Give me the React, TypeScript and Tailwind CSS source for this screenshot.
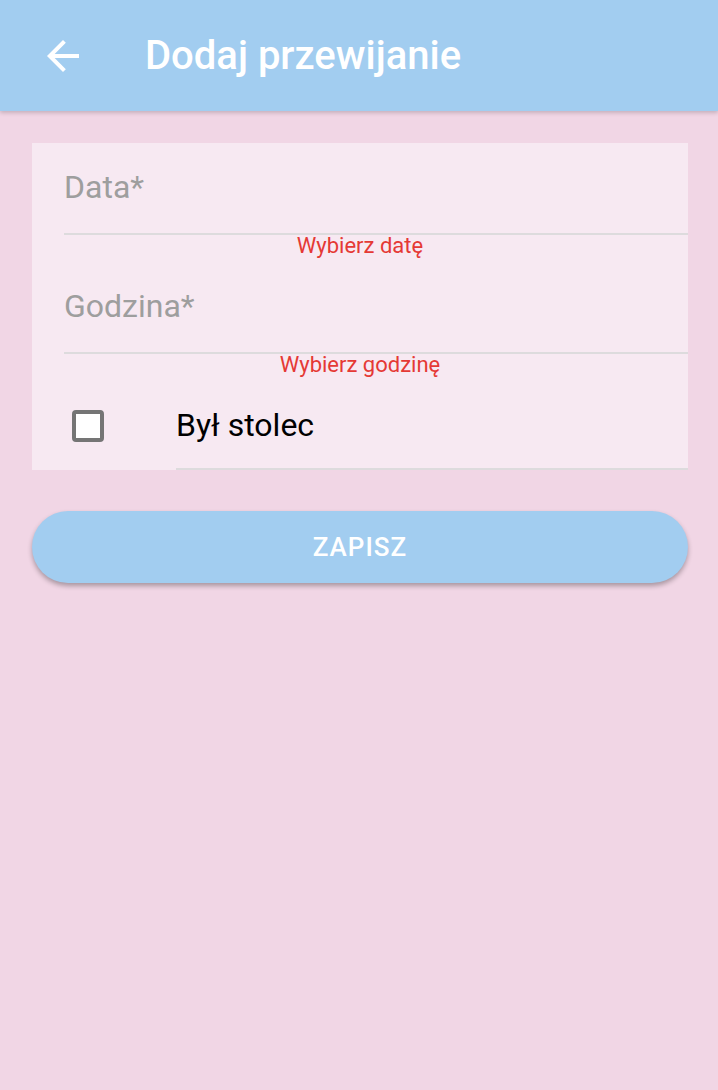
import React from "react";

export default function App() {
  return (
    <div
      className="min-h-[1090px] w-full bg-[#f1d6e5]"
      style={{ fontFamily: "Roboto, 'Noto Sans', sans-serif" }}
    >
      <header className="relative z-10 flex h-[111px] items-center bg-[#a2cdf0] shadow-[0_2px_4px_rgba(0,0,0,0.18)]">
        <svg
          className="ml-[39px] h-[48px] w-[48px]"
          viewBox="0 0 24 24"
          fill="#ffffff"
        >
          <path d="M20 11H7.83l5.59-5.59L12 4l-8 8 8 8 1.41-1.41L7.83 13H20v-2z" />
        </svg>
        <h1 className="ml-[58px] text-[40px] font-medium leading-none text-white">
          Dodaj przewijanie
        </h1>
      </header>

      <main className="pl-8 pr-[30px] pt-8">
        <div className="bg-[#f7e9f2]">
          {/* Data field */}
          <div className="ml-8 h-[92px] border-b-2 border-[#dddbdd] pt-[28px]">
            <div className="text-[32px] leading-none text-[#9e9e9e]">Data*</div>
          </div>
          <div className="h-[27px] text-center text-[22px] leading-none text-[#e53935]">
            Wybierz datę
          </div>

          {/* Godzina field */}
          <div className="ml-8 h-[92px] border-b-2 border-[#dddbdd] pt-[28px]">
            <div className="text-[32px] leading-none text-[#9e9e9e]">Godzina*</div>
          </div>
          <div className="h-[27px] text-center text-[22px] leading-none text-[#e53935]">
            Wybierz godzinę
          </div>

          {/* Checkbox row */}
          <div className="flex h-[89px]">
            <div className="flex w-[144px] items-center pl-[40px]">
              <div className="h-[32px] w-[32px] rounded-[4px] border-[4px] border-[#757575] bg-white" />
            </div>
            <div className="flex flex-1 items-center border-b-2 border-[#dddbdd]">
              <span className="text-[32px] leading-none text-black">Był stolec</span>
            </div>
          </div>
        </div>

        <button className="mt-[41px] flex h-[72px] w-full items-center justify-center rounded-full bg-[#a2cdf0] text-[26px] font-medium tracking-[1px] text-white shadow-[0_3px_5px_rgba(0,0,0,0.3)]">
          ZAPISZ
        </button>
      </main>
    </div>
  );
}
